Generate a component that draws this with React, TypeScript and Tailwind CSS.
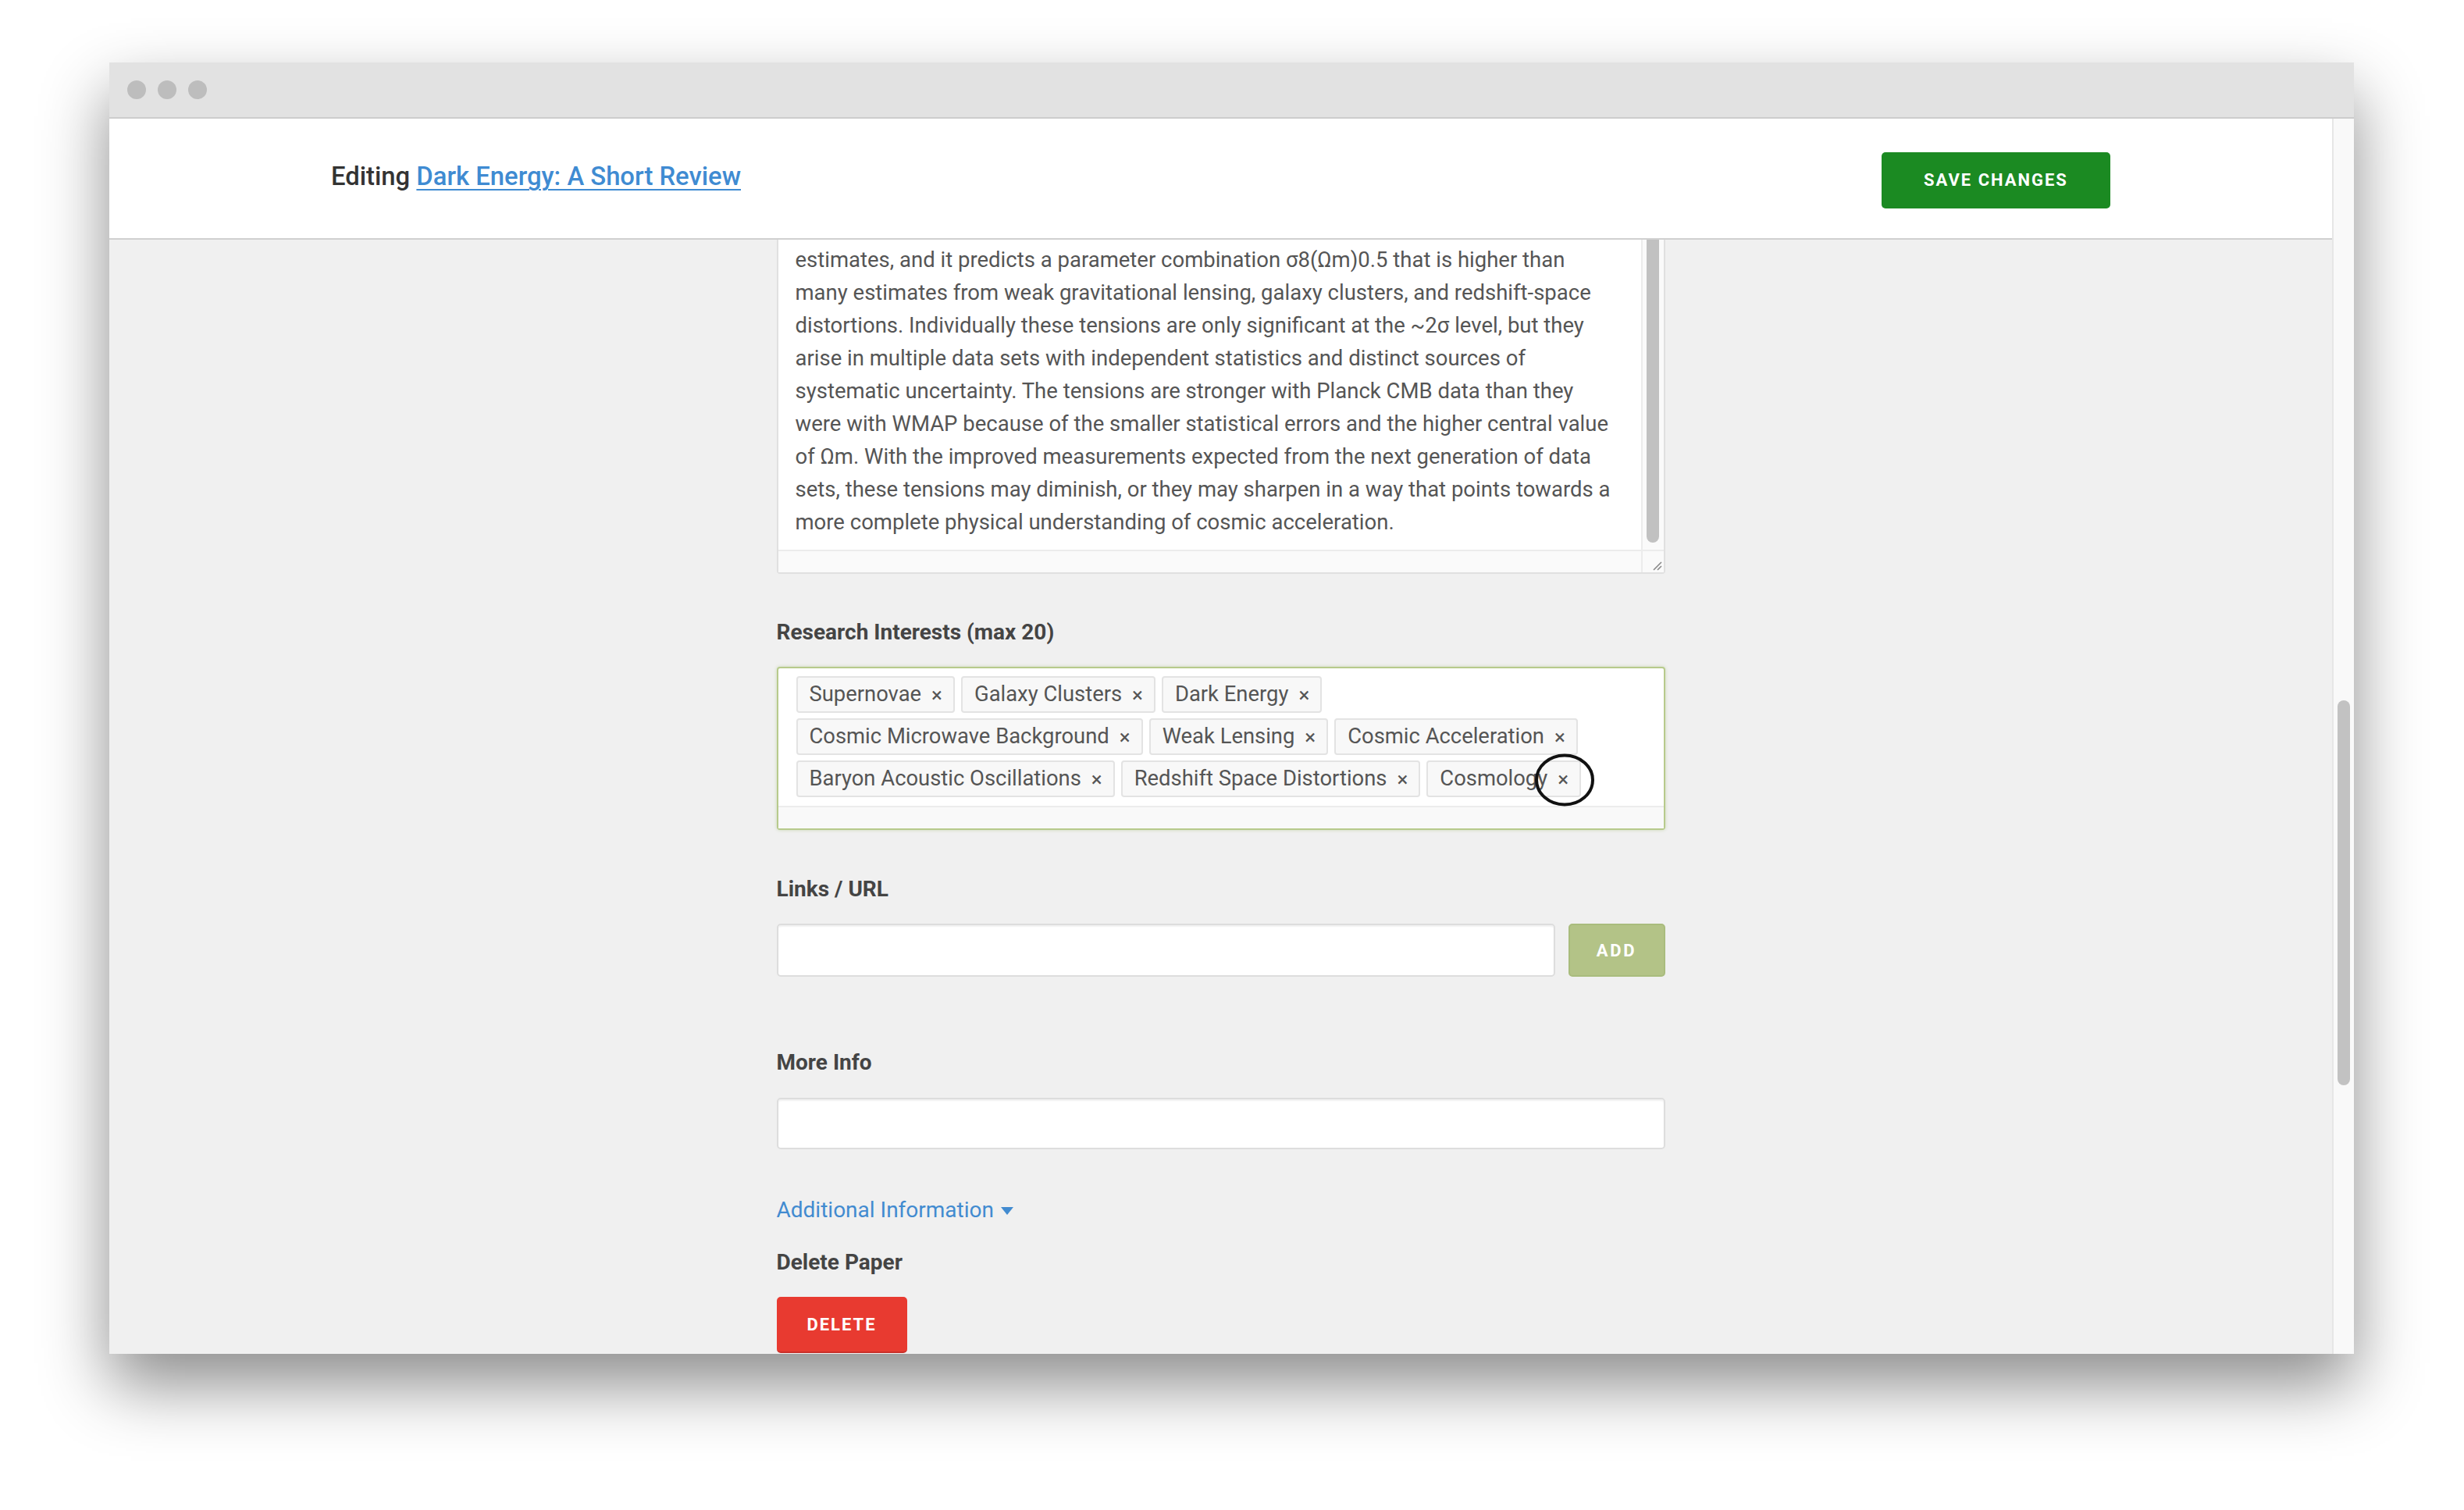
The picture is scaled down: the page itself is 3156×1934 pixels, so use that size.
import React from "react";

const abstractLines = [
  "estimates, and it predicts a parameter combination σ8(Ωm)0.5 that is higher than",
  "many estimates from weak gravitational lensing, galaxy clusters, and redshift-space",
  "distortions. Individually these tensions are only significant at the ~2σ level, but they",
  "arise in multiple data sets with independent statistics and distinct sources of",
  "systematic uncertainty. The tensions are stronger with Planck CMB data than they",
  "were with WMAP because of the smaller statistical errors and the higher central value",
  "of Ωm. With the improved measurements expected from the next generation of data",
  "sets, these tensions may diminish, or they may sharpen in a way that points towards a",
  "more complete physical understanding of cosmic acceleration.",
];

const tagRows: string[][] = [
  ["Supernovae", "Galaxy Clusters", "Dark Energy"],
  ["Cosmic Microwave Background", "Weak Lensing", "Cosmic Acceleration"],
  ["Baryon Acoustic Oscillations", "Redshift Space Distortions", "Cosmology"],
];

function Tag({ label, marked }: { label: string; marked?: boolean }) {
  return (
    <div className="relative flex h-[47px] items-center rounded-[4px] border-2 border-[#e3e3e3] bg-[#f8f8f8] pl-[15px] pr-[14px] text-[27.4px] text-[#555555]">
      <span>{label}</span>
      <span className="ml-[13px] text-[26px] leading-none text-[#555555]">×</span>
      {marked && (
        <svg
          className="pointer-events-none absolute right-[-20px] top-[-12px]"
          width="78"
          height="70"
          viewBox="0 0 78 70"
        >
          <ellipse cx="39" cy="35" rx="36" ry="31.5" fill="none" stroke="#111" strokeWidth="4" />
        </svg>
      )}
    </div>
  );
}

function FieldLabel({ children, className = "" }: { children: React.ReactNode; className?: string }) {
  return <div className={`text-[28px] font-bold leading-[32px] text-[#444444] ${className}`}>{children}</div>;
}

export default function App() {
  return (
    <div
      className="h-[1934px] w-[3156px] overflow-hidden bg-white pl-[140px] pt-[80px]"
      style={{ fontFamily: "Roboto, 'Noto Sans', Arial, sans-serif" }}
    >
      <div className="flex h-[1654px] w-[2875px] flex-col shadow-[0_40px_80px_rgba(0,0,0,0.45)]">
        {/* title bar */}
        <div className="flex h-[72px] shrink-0 items-center gap-[15px] border-b-2 border-[#cdcdcd] bg-[#e2e2e2] pl-[23px]">
          <span className="h-[24px] w-[24px] rounded-full bg-[#bdbdbd]" />
          <span className="h-[24px] w-[24px] rounded-full bg-[#bdbdbd]" />
          <span className="h-[24px] w-[24px] rounded-full bg-[#bdbdbd]" />
        </div>

        <div className="flex min-h-0 flex-1">
          {/* page */}
          <div className="flex min-w-0 flex-1 flex-col">
            <header className="flex h-[155px] shrink-0 items-center border-b-2 border-[#d0d0d0] bg-white">
              <div className="mx-auto flex w-[2279px] items-center justify-between">
                <div className="mb-[3px] text-[32.8px] font-medium text-[#333333]">
                  Editing{" "}
                  <a className="text-[#3f8bd2] underline decoration-2 underline-offset-[5px]" href="#">
                    Dark Energy: A Short Review
                  </a>
                </div>
                <button className="mt-[4px] flex h-[72px] w-[293px] items-center justify-center rounded-[5px] bg-[#1b8a22] text-[22px] font-bold tracking-[0.09em] text-white">
                  SAVE CHANGES
                </button>
              </div>
            </header>

            <main className="min-h-0 flex-1 overflow-hidden bg-[#f0f0f0]">
              <div className="mx-auto w-[1138px]">
                {/* abstract textarea, scrolled */}
                <div className="flex flex-col rounded-b-[4px] border-x-2 border-b-2 border-[#e0e0e0] bg-white">
                  <div className="flex">
                    <div className="flex-1 pb-[14px] pl-[22px] pt-[5px] text-[27.5px] leading-[42px] text-[#555555]">
                      {abstractLines.map((line) => (
                        <div key={line} className="whitespace-nowrap">
                          {line}
                        </div>
                      ))}
                    </div>
                    <div className="w-[29px] border-l-2 border-[#ececec] bg-[#fafafa] pl-[5px]">
                      <div className="h-[388px] w-[16px] rounded-b-full bg-[#c1c1c1]" />
                    </div>
                  </div>
                  <div className="flex h-[29px] border-t-2 border-[#ececec] bg-[#fafafa]">
                    <div className="flex-1" />
                    <div className="relative w-[29px] border-l-2 border-[#ececec]">
                      <svg className="absolute bottom-[2px] right-[2px]" width="14" height="14" viewBox="0 0 14 14">
                        <path d="M13 3 L3 13 M13 8 L8 13" stroke="#8a8a8a" strokeWidth="1.6" fill="none" />
                      </svg>
                    </div>
                  </div>
                </div>

                <FieldLabel className="mt-[59px]">Research Interests (max 20)</FieldLabel>

                {/* tag input */}
                <div className="mt-[28px] overflow-visible rounded-[4px] border-2 border-[#b7ca8c] bg-white shadow-[0_0_4px_rgba(160,190,110,0.45)]">
                  <div className="flex flex-col gap-[7px] pb-[11px] pl-[23px] pt-[10px]">
                    {tagRows.map((row, i) => (
                      <div key={i} className="flex gap-[8px]">
                        {row.map((t) => (
                          <Tag key={t} label={t} marked={t === "Cosmology"} />
                        ))}
                      </div>
                    ))}
                  </div>
                  <div className="h-[29px] border-t-2 border-[#ececec] bg-[#f9f9f9]" />
                </div>

                <FieldLabel className="mt-[60px]">Links / URL</FieldLabel>
                <div className="mt-[28px] flex gap-[17px]">
                  <input
                    className="h-[68px] flex-1 rounded-[5px] border-2 border-[#dddddd] bg-white shadow-[inset_0_2px_2px_rgba(0,0,0,0.06)] outline-none"
                    type="text"
                  />
                  <button className="flex h-[68px] w-[124px] items-center justify-center rounded-[5px] border-2 border-[#a9bc7d] bg-[#b3c387] text-[22px] font-bold tracking-[0.12em] text-white">
                    ADD
                  </button>
                </div>

                <FieldLabel className="mt-[94px]">More Info</FieldLabel>
                <input
                  className="mt-[29px] block h-[66px] w-full rounded-[5px] border-2 border-[#dddddd] bg-white shadow-[inset_0_2px_2px_rgba(0,0,0,0.06)] outline-none"
                  type="text"
                />

                <a href="#" className="mt-[62px] flex items-center gap-[9px] text-[28px] leading-[32px] text-[#428bd0]">
                  Additional Information
                  <span className="mt-[2px] h-0 w-0 border-x-[8px] border-t-[10px] border-x-transparent border-t-[#428bd0]" />
                </a>

                <FieldLabel className="mt-[35px]">Delete Paper</FieldLabel>
                <button className="mt-[28px] flex h-[72px] w-[167px] items-center justify-center rounded-[5px] border-b-2 border-[#c8302a] bg-[#e83a30] text-[22px] font-bold tracking-[0.09em] text-white">
                  DELETE
                </button>
              </div>
            </main>
          </div>

          {/* window scrollbar */}
          <div className="w-[28px] shrink-0 border-l-2 border-[#e6e6e6] bg-[#f9f9f9] pl-[5px] pt-[745px]">
            <div className="h-[493px] w-[16px] rounded-full bg-[#c2c2c2]" />
          </div>
        </div>
      </div>
    </div>
  );
}
